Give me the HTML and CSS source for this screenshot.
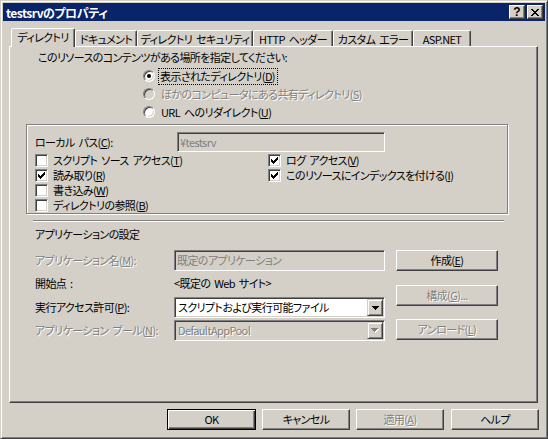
FILE: index.html
```html
<!DOCTYPE html>
<html lang="ja">
<head>
<meta charset="utf-8">
<title>testsrvのプロパティ</title>
<link rel="stylesheet" href="styles.css">
</head>
<body>
<div class="window">
  <div class="titlebar">
    <span class="title">testsrvのプロパティ</span>
    <button class="capbtn help">?</button>
    <button class="capbtn close" aria-label="閉じる">
      <svg width="8" height="7" viewBox="0 0 8 7"><path fill="#000" d="M0 0h2v1h-2z M6 0h2v1h-2z M1 1h2v1h-2z M5 1h2v1h-2z M2 2h4v1h-4z M3 3h2v1h-2z M2 4h4v1h-4z M1 5h2v1h-2z M5 5h2v1h-2z M0 6h2v1h-2z M6 6h2v1h-2z"/></svg>
    </button>
  </div>
  <div class="content">
    <div class="tabs">
      <div class="tab sel w1">ディレクトリ</div>
      <div class="tab w2">ドキュメント</div>
      <div class="tab w3">ディレクトリ セキュリティ</div>
      <div class="tab w4">HTTP ヘッダー</div>
      <div class="tab w5">カスタム エラー</div>
      <div class="tab w6">ASP.NET</div>
    </div>
    <div class="panel">
      <div class="prompt">このリソースのコンテンツがある場所を指定してください:</div>
      <div class="radios">
        <div class="radio-row"><span class="radio checked"></span><span class="rlbl focus">表示されたディレクトリ(<u>D</u>)</span></div>
        <div class="radio-row"><span class="radio disabled"></span><span class="rlbl dis">ほかのコンピュータにある共有ディレクトリ(<u>S</u>)</span></div>
        <div class="radio-row"><span class="radio"></span><span class="rlbl">URL へのリダイレクト(<u>U</u>)</span></div>
      </div>
      <div class="group">
        <div class="lp-row">
          <span class="lp-label">ローカル パス(<u>C</u>):</span>
          <span class="field lp-field dis-field">¥testsrv</span>
        </div>
        <div class="checks">
          <div class="chk-row"><span class="chk"></span><span class="ct">スクリプト ソース アクセス(<u>T</u>)</span></div>
          <div class="chk-row"><span class="chk on"><svg width="7" height="7" viewBox="0 0 7 7"><path d="M0 2H1V3H2V4H3V3H4V2H5V1H6V0H7V3H6V4H5V5H4V6H3V7H2V6H1V5H0Z"/></svg></span><span class="ct">ログ アクセス(<u>V</u>)</span></div>
          <div class="chk-row"><span class="chk on"><svg width="7" height="7" viewBox="0 0 7 7"><path d="M0 2H1V3H2V4H3V3H4V2H5V1H6V0H7V3H6V4H5V5H4V6H3V7H2V6H1V5H0Z"/></svg></span><span class="ct">読み取り(<u>R</u>)</span></div>
          <div class="chk-row"><span class="chk on"><svg width="7" height="7" viewBox="0 0 7 7"><path d="M0 2H1V3H2V4H3V3H4V2H5V1H6V0H7V3H6V4H5V5H4V6H3V7H2V6H1V5H0Z"/></svg></span><span class="ct">このリソースにインデックスを付ける(<u>I</u>)</span></div>
          <div class="chk-row"><span class="chk"></span><span class="ct">書き込み(<u>W</u>)</span></div>
          <div></div>
          <div class="chk-row"><span class="chk"></span><span class="ct">ディレクトリの参照(<u>B</u>)</span></div>
          <div></div>
        </div>
      </div>
      <div class="sep"></div>
      <div class="app-title">アプリケーションの設定</div>
      <div class="app">
        <div class="app-left">
          <div class="row row-a">
            <span class="label dis">アプリケーション名(<u>M</u>):</span>
            <span class="field app-field dis-field">既定のアプリケーション</span>
          </div>
          <div class="row row-b">
            <span class="label">開始点 :</span>
            <span>&lt;既定の Web サイト&gt;</span>
          </div>
          <div class="row row-c">
            <span class="label">実行アクセス許可(<u>P</u>):</span>
            <span class="combo">
              <span class="val">スクリプトおよび実行可能ファイル</span>
              <span class="drop"><svg width="7" height="4" viewBox="0 0 7 4"><path fill="#000" d="M0 0H7V1H6V2H5V3H4V4H3V3H2V2H1V1H0Z"/></svg></span>
            </span>
          </div>
          <div class="row row-d">
            <span class="label dis">アプリケーション プール(<u>N</u>):</span>
            <span class="combo combo-dis">
              <span class="val dis">DefaultAppPool</span>
              <span class="drop"><svg width="8" height="5" viewBox="0 0 8 5"><path fill="#fff" d="M1 1H8V2H7V3H6V4H5V5H4V4H3V3H2V2H1Z"/><path fill="#808080" d="M0 0H7V1H6V2H5V3H4V4H3V3H2V2H1V1H0Z"/></svg></span>
            </span>
          </div>
        </div>
        <div class="app-right">
          <button class="btn side b1">作成(<u>E</u>)</button>
          <button class="btn side b2 dis">構成(<u>G</u>)...</button>
          <button class="btn side b3 dis">アンロード(<u>L</u>)</button>
        </div>
      </div>
    </div>
    <div class="dlgbtns">
      <button class="btn dlg default">OK</button>
      <button class="btn dlg">キャンセル</button>
      <button class="btn dlg dis">適用(<u>A</u>)</button>
      <button class="btn dlg last">ヘルプ</button>
    </div>
  </div>
</div>
</body>
</html>
```
FILE: styles.css
```css
* { box-sizing: border-box; }
html, body { margin: 0; padding: 0; }
body {
  width: 548px;
  height: 439px;
  overflow: hidden;
  background: #D4D0C8;
  font-family: "Noto Sans CJK JP", "Noto Sans", sans-serif;
  font-size: 11px;
  letter-spacing: -0.6px;
  word-spacing: 2px;
  line-height: 15px;
  color: #000;
  font-feature-settings: "palt" 1;
}
u { text-decoration: underline; text-underline-offset: 1px; }

.window {
  width: 548px;
  height: 439px;
  background: #D4D0C8;
  border: 1px solid;
  border-color: #D4D0C8 #404040 #404040 #D4D0C8;
  box-shadow: inset 1px 1px 0 #fff, inset -1px -1px 0 #808080;
  padding: 2px;
}

.titlebar {
  height: 18px;
  background: #0A246A;
  display: flex;
  align-items: center;
  padding: 0 2px 0 3px;
}
.title {
  flex: 1;
  color: #fff;
  font-weight: bold;
  font-size: 12px;
  letter-spacing: -0.5px;
  line-height: 15px;
}
.capbtn {
  width: 16px;
  height: 14px;
  padding: 0;
  margin: 0;
  background: #D4D0C8;
  border: 1px solid;
  border-color: #fff #404040 #404040 #fff;
  box-shadow: inset -1px -1px 0 #808080;
  display: flex;
  align-items: center;
  justify-content: center;
}
.capbtn + .capbtn { margin-left: 2px; }
.help {
  font-family: "Liberation Sans", sans-serif;
  font-weight: bold;
  font-size: 12px;
  line-height: 12px;
  letter-spacing: 0;
  color: #000;
}

.content { padding: 7px 0 0 6px; }

.tabs {
  display: flex;
  align-items: flex-end;
  height: 18px;
  padding-left: 2px;
  position: relative;
  z-index: 1;
}
.tab {
  height: 16px;
  border: 1px solid;
  border-bottom: none;
  border-color: #fff #404040 transparent #fff;
  box-shadow: inset -1px 0 0 #808080;
  border-radius: 2px 2px 0 0;
  text-align: center;
  line-height: 15px;
  padding-top: 1px;
  white-space: nowrap;
  background: #D4D0C8;
}
.tab.sel {
  height: 19px;
  margin-bottom: -1px;
  padding-top: 1px;
}
.w1 { width: 64px; }
.w2 { width: 62px; }
.w3 { width: 116px; }
.w4 { width: 80px; }
.w5 { width: 80px; }
.w6 { width: 58px; }

.panel {
  width: 529px;
  height: 357px;
  border: 1px solid;
  border-color: #fff #404040 #404040 #fff;
  box-shadow: inset -1px -1px 0 #808080;
}

.prompt { margin: 3px 0 0 28px; }

.radios { margin: 2px 0 0 133px; }
.radio-row { display: flex; align-items: center; height: 18px; }
.radio {
  position: relative;
  width: 12px;
  height: 12px;
  flex-shrink: 0;
  border-radius: 50%;
  background: #fff;
  border: 1px solid;
  border-color: #808080 #fff #fff #808080;
  box-shadow: inset 1px 1px 0 #404040, inset -1px -1px 0 #D4D0C8;
}
.radio.disabled { background: #D4D0C8; }
.radio.checked::after {
  content: "";
  position: absolute;
  left: 3px;
  top: 3px;
  width: 4px;
  height: 4px;
  border-radius: 50%;
  background: #000;
}
.rlbl { margin-left: 6px; white-space: nowrap; }
.rlbl.focus {
  margin-left: 4px;
  padding: 0 2px 0 1px;
  outline: 1px dotted #000;
  outline-offset: 0;
}
.dis { color: #808080; text-shadow: 1px 1px 0 #fff; }

.group {
  margin: 3px 0 0 16px;
  width: 482px;
  height: 90px;
  border: 1px solid #808080;
  box-shadow: inset 1px 1px 0 #fff, 1px 1px 0 #fff;
}
.lp-row {
  display: flex;
  align-items: center;
  height: 20px;
  margin: 7px 0 0 8px;
}
.lp-label { width: 142px; }
.field {
  display: flex;
  align-items: center;
  border: 1px solid;
  border-color: #808080 #fff #fff #808080;
  box-shadow: inset 1px 1px 0 #404040, inset -1px -1px 0 #D4D0C8;
  padding-left: 2px;
  white-space: nowrap;
  overflow: hidden;
}
.dis-field { background: #D4D0C8; color: #808080; }
.lp-field { width: 208px; height: 20px; }

.checks {
  display: grid;
  grid-template-columns: 233px 1fr;
  grid-auto-rows: 15px;
  margin: 1px 0 0 8px;
}
.chk-row { display: flex; align-items: center; white-space: nowrap; height: 15px; overflow: hidden; }
.ct { display: block; height: 15px; line-height: 15px; }
.chk {
  width: 13px;
  height: 13px;
  flex-shrink: 0;
  margin-right: 5px;
  background: #fff;
  border: 1px solid;
  border-color: #808080 #fff #fff #808080;
  box-shadow: inset 1px 1px 0 #404040, inset -1px -1px 0 #D4D0C8;
  display: flex;
  align-items: center;
  justify-content: center;
}
.chk svg { display: block; fill: #000; }

.sep {
  margin: 6px 0 0 23px;
  width: 471px;
  height: 2px;
  border-top: 1px solid #808080;
  border-bottom: 1px solid #fff;
}
.app-title { margin: 5px 0 0 25px; }

.app { display: flex; margin-left: 25px; }
.app-left { width: 350px; }
.app-right { margin-left: 11px; width: 102px; display: flex; flex-direction: column; }
.row { display: flex; align-items: center; white-space: nowrap; }
.row .label { width: 139px; flex-shrink: 0; }
.row-a { height: 21px; margin-top: 8px; }
.row-b { height: 15px; margin-top: 5px; }
.row-c { height: 21px; margin-top: 6px; }
.row-d { height: 21px; margin-top: 2px; }
.app-field { width: 211px; height: 21px; }

.combo {
  width: 211px;
  height: 21px;
  display: flex;
  align-items: stretch;
  background: #fff;
  border: 1px solid;
  border-color: #808080 #fff #fff #808080;
  box-shadow: inset 1px 1px 0 #404040, inset -1px -1px 0 #D4D0C8;
  padding: 1px;
}
.combo-dis { background: #D4D0C8; }
.combo .val { flex: 1; padding-left: 2px; display: flex; align-items: center; }
.drop {
  width: 16px;
  flex-shrink: 0;
  background: #D4D0C8;
  border: 1px solid;
  border-color: #D4D0C8 #404040 #404040 #D4D0C8;
  box-shadow: inset 1px 1px 0 #fff, inset -1px -1px 0 #808080;
  display: flex;
  align-items: center;
  justify-content: center;
}
.drop svg { display: block; }

.btn {
  font: inherit;
  letter-spacing: inherit;
  word-spacing: inherit;
  font-feature-settings: "palt" 1;
  color: #000;
  background: #D4D0C8;
  border: 1px solid;
  border-color: #fff #404040 #404040 #fff;
  box-shadow: inset -1px -1px 0 #808080;
  padding: 0;
  margin: 0;
  height: 21px;
  text-align: center;
  white-space: nowrap;
}
.btn.dis { color: #808080; text-shadow: 1px 1px 0 #fff; }
.side { width: 102px; }
.b1 { margin-top: 8px; }
.b2 { margin-top: 14px; }
.b3 { margin-top: 13px; }

.dlgbtns {
  display: flex;
  justify-content: flex-end;
  gap: 6px;
  margin-top: 6px;
  width: 530px;
}
.dlg { width: 88px; }
.dlg.last { margin-left: 1px; }
.default {
  width: 89px;
  border: 1px solid #000;
  box-shadow: inset 1px 1px 0 #fff, inset -1px -1px 0 #404040, inset -2px -2px 0 #808080;
}
```
